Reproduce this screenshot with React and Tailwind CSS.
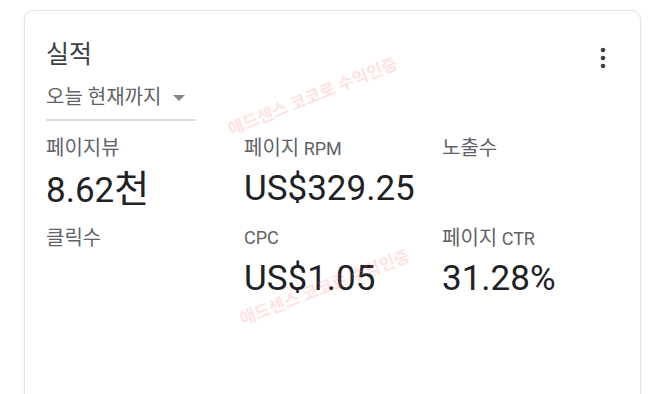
import React from "react";

function Cell({ label, value }) {
  return (
    <div className="flex flex-col">
      <div className="h-[24px] text-[18px] leading-[24px] text-[#5f6368] whitespace-nowrap">{label}</div>
      {value ? (
        <div className="mt-[9px] h-[40px] text-[35px] leading-[40px] text-[#202124] whitespace-nowrap">{value}</div>
      ) : (
        <div className="mt-[9px] h-[40px]" />
      )}
    </div>
  );
}

const K = ({ children }) => <span className="text-[20px]">{children}</span>;

export default function App() {
  return (
    <div
      className="relative w-[653px] h-[394px] overflow-hidden bg-white"
      style={{ fontFamily: 'Roboto, "Noto Sans CJK KR", sans-serif' }}
    >
      <div className="ml-[24px] mt-[10px] w-[617px] h-[420px] rounded-[10px] border border-[#e3e3e3] bg-white shadow-[0_0_3px_rgba(0,0,0,0.06)] pl-[21px] pt-[28px]">
        <div className="flex items-start justify-between">
          <div className="text-[25px] leading-[32px] text-[#3c4043]">실적</div>
          <svg width="8" height="24" viewBox="0 0 8 24" className="mt-[7px] mr-[33px]">
            <circle cx="4" cy="4" r="2.3" fill="#3c4043" />
            <circle cx="4" cy="12" r="2.3" fill="#3c4043" />
            <circle cx="4" cy="20" r="2.3" fill="#3c4043" />
          </svg>
        </div>
        <div className="mt-[14px] flex w-[150px] items-center border-b-2 border-[#dadce0] pb-[10px]">
          <span className="text-[20px] leading-[24px] text-[#5f6368] whitespace-nowrap">오늘 현재까지</span>
          <svg width="12" height="6" viewBox="0 0 12 6" className="ml-[12px] mt-[2px]">
            <path d="M0 0 L12 0 L6 6 Z" fill="#80868b" />
          </svg>
        </div>
        <div className="mt-[15px] grid grid-cols-[198px_198px_198px] gap-y-[17px]">
          <Cell label={<K>페이지뷰</K>} value={<>8.62<span className="text-[38px]">천</span></>} />
          <Cell label={<><K>페이지</K> RPM</>} value="US$329.25" />
          <Cell label={<K>노출수</K>} />
          <Cell label={<K>클릭수</K>} />
          <Cell label="CPC" value="US$1.05" />
          <Cell label={<><K>페이지</K> CTR</>} value="31.28%" />
        </div>
      </div>
      <div className="pointer-events-none absolute left-[313px] top-[97px] -translate-x-1/2 -translate-y-1/2 -rotate-[22deg] whitespace-nowrap text-[17px] font-semibold text-[#ff7070] opacity-20">
        애드센스 코코로 수익인증
      </div>
      <div className="pointer-events-none absolute left-[325px] top-[288px] -translate-x-1/2 -translate-y-1/2 -rotate-[21deg] whitespace-nowrap text-[17px] font-semibold text-[#ff7070] opacity-20">
        애드센스 코코로 수익인증
      </div>
    </div>
  );
}
